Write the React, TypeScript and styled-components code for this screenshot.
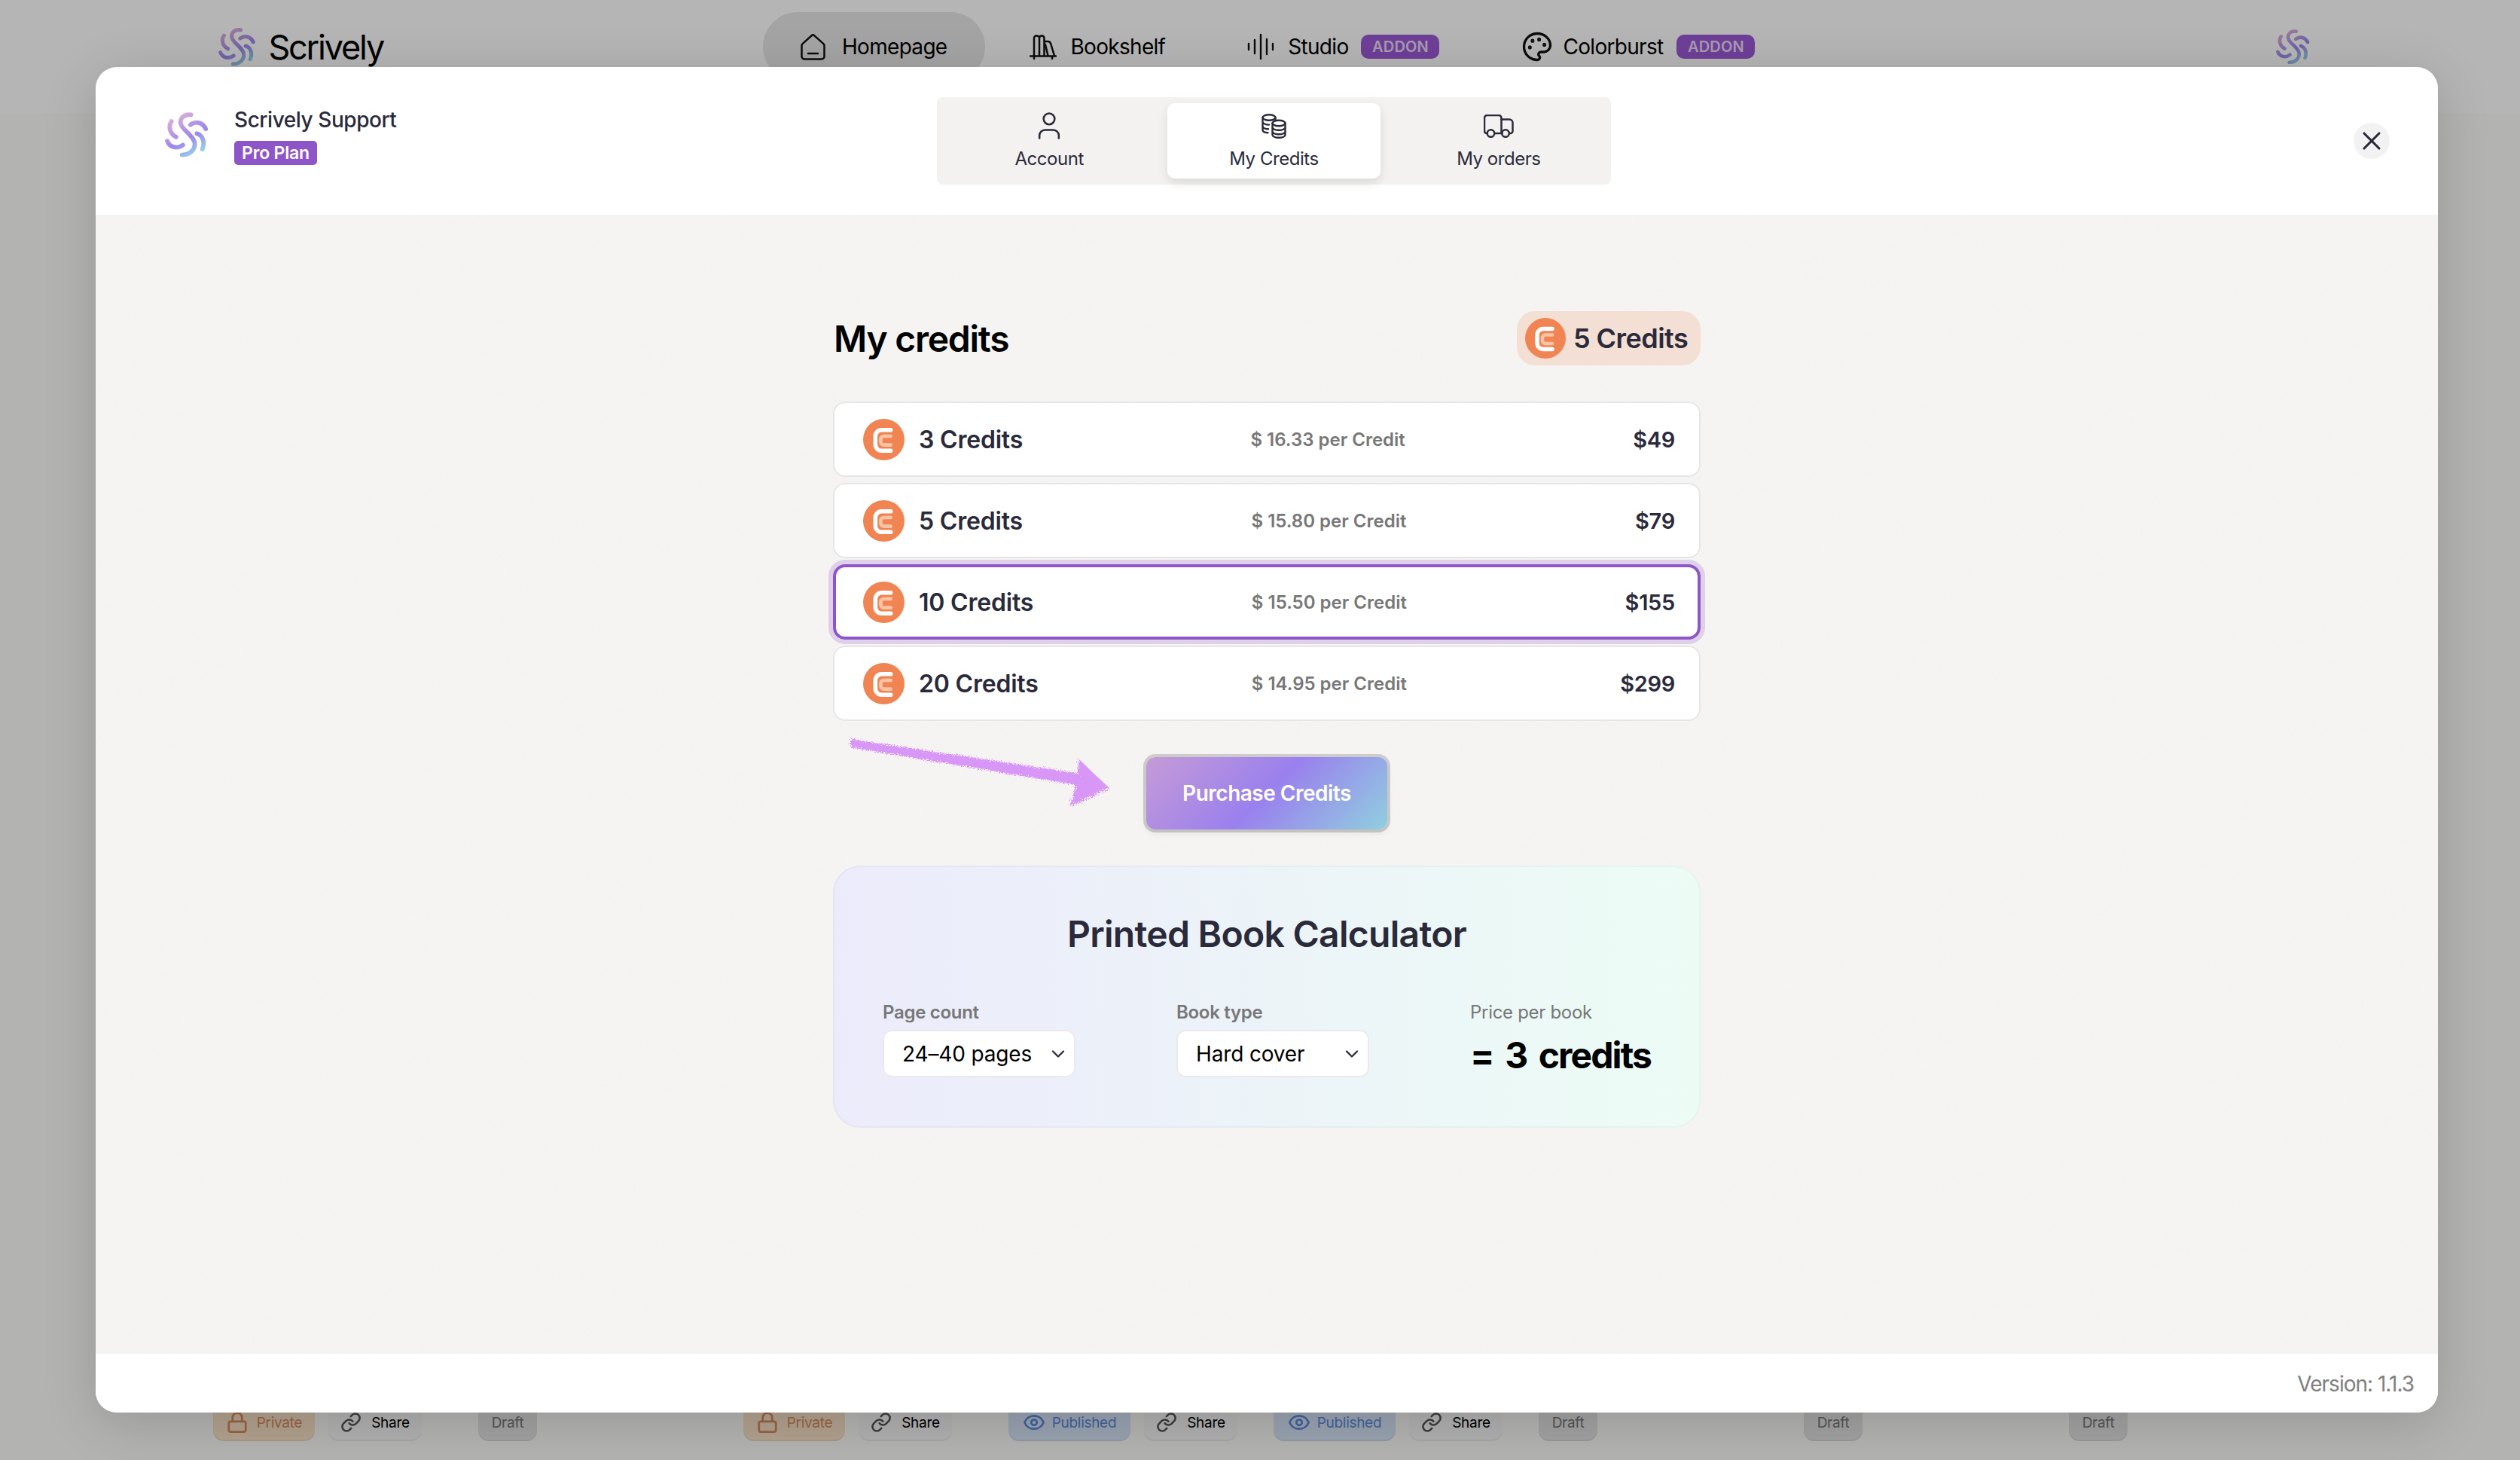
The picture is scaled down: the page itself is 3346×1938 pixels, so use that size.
import React from "react";
import styled, { createGlobalStyle } from "styled-components";
import { Lock, Link as LinkIcon, Eye, Palette, User, ChevronDown, X } from "lucide-react";

const Global = createGlobalStyle`
  html, body { margin: 0; padding: 0; }
  body { font-family: Inter, "Liberation Sans", sans-serif; color: #000; overflow: hidden; }
  * { box-sizing: border-box; }
`;

const Page = styled.div`
  position: relative; width: 3346px; height: 1938px; overflow: hidden;
  display: flex; flex-direction: column; justify-content: space-between;
  background: linear-gradient(#ffffff 0 150px, #fdfcfa 150px);
`;
const Nav = styled.nav`
  display: flex; align-items: flex-start; padding: 16px 279px 0 290px;
`;
const Brand = styled.div`
  display: flex; align-items: center; gap: 17px; height: 92px; width: 219px;
  font-size: 45px; letter-spacing: -2.2px; font-weight: 400; color: #000;
`;
const BrandEnd = styled.div`
  display: flex; align-items: center; height: 92px; width: 45px;
`;
const NavLinks = styled.div`
  display: flex; gap: 9px; margin-left: 504px; margin-right: auto;
`;
const NavLink = styled.div<{ $active?: boolean; $gap?: number }>`
  display: flex; align-items: center; gap: ${(p) => p.$gap ?? 19}px; height: 92px; padding: 0 50px;
  border-radius: 50px; font-size: 28px; letter-spacing: -.7px; color: #000;
  background: ${(p) => (p.$active ? "#e8e8e8" : "transparent")};
`;
const PaletteIcon = styled(Palette)`
  margin-right: -6px;
`;
const AddonBadge = styled.span`
  display: inline-flex; align-items: center; justify-content: center;
  width: 104px; height: 32px; margin-left: -1px; border-radius: 10px; background: #9b59d6;
  color: #e9dcf6; font-size: 20px; font-weight: 600; letter-spacing: .2px;
`;
const BottomRow = styled.div`
  display: grid; grid-template-columns: repeat(8, 352px); padding: 0 0 25px 283px;
`;
const ChipGroup = styled.div`
  display: flex; gap: 18px;
`;
const Chip = styled.div<{ $w: number; $bg: string; $fg: string; $gap?: number }>`
  display: flex; align-items: center; justify-content: center; gap: ${(p) => p.$gap ?? 10}px;
  width: ${(p) => p.$w}px; height: 50px; border-radius: 0 0 14px 14px;
  background: ${(p) => p.$bg}; color: ${(p) => p.$fg}; font-size: 19px; letter-spacing: -.3px;
  box-shadow: inset 0 -2px 0 rgba(0,0,0,.05);
`;
const ShareLabel = styled.span`
  color: #000;
`;
const Scrim = styled.div`
  position: absolute; inset: 0; display: flex; padding: 89px 109px 63px 127px;
  background: rgba(0,0,0,.29);
`;
const Modal = styled.div`
  flex: 1; display: flex; flex-direction: column; background: #fff; border-radius: 28px;
  overflow: hidden; box-shadow: 0 14px 70px rgba(0,0,0,.16);
`;
const Header = styled.header`
  display: grid; grid-template-columns: 1025px 895px 1fr; align-items: center;
  height: 196px; padding: 0 64px 0 92px; flex: none;
`;
const Identity = styled.div`
  align-self: start; margin-top: 60px; display: flex; align-items: flex-start; gap: 34px;
`;
const IdentityText = styled.div`
  display: flex; flex-direction: column; align-items: flex-start; gap: 11px; margin-top: -7px;
`;
const UserName = styled.div`
  font-size: 28px; line-height: 34px; font-weight: 500; color: #2a2a3a; letter-spacing: -.45px;
`;
const PlanBadge = styled.div`
  display: flex; align-items: center; justify-content: center; width: 110px; height: 32px;
  border-radius: 5px; background: #8e55c8; color: #fff; font-size: 23px; font-weight: 600; letter-spacing: -.2px;
`;
const Tabs = styled.div`
  display: grid; grid-template-columns: repeat(3, 1fr); gap: 16px; padding: 8px;
  height: 116px; background: #f3f2f0; border-radius: 8px;
`;
const Tab = styled.div<{ $active?: boolean }>`
  display: flex; flex-direction: column; align-items: center; padding-top: 13px; gap: 12px;
  font-size: 24px; line-height: 30px; color: #2a2a3a; letter-spacing: -.45px;
  border-radius: 10px; background: ${(p) => (p.$active ? "#fff" : "transparent")};
  box-shadow: ${(p) => (p.$active ? "0 6px 14px rgba(0,0,0,.1)" : "none")};
`;
const TabIcon = styled.div`
  display: flex; align-items: center; justify-content: center; height: 34px;
`;
const CloseButton = styled.button`
  justify-self: end; width: 48px; height: 48px; border: 0; padding: 0; border-radius: 50%;
  background: #f2f2f3; color: #2a2a3a; display: flex; align-items: center; justify-content: center;
`;
const Body = styled.main`
  position: relative; flex: 1; background: #f5f4f2; padding-top: 128px;
`;
const Grain = styled.svg`
  position: absolute; inset: 0; width: 100%; height: 100%; opacity: .5; pointer-events: none;
`;
const Column = styled.div`
  position: relative; width: 1152px; margin: 0 auto; display: flex; flex-direction: column;
`;
const TitleRow = styled.div`
  display: flex; align-items: center; justify-content: space-between; height: 72px; padding-left: 1px;
`;
const Title = styled.h1`
  margin: 0; font-size: 48px; font-weight: 600; color: #000; letter-spacing: -1.25px;
`;
const Balance = styled.div`
  display: flex; align-items: center; gap: 10px; width: 244px; height: 72px; padding-left: 11px;
  border-radius: 24px; background: #f4dfd4; color: #2a2a3a;
  font-size: 36px; font-weight: 600; letter-spacing: -.55px;
`;
const RowList = styled.div`
  display: flex; flex-direction: column; gap: 8px; margin-top: 48px;
`;
const Row = styled.div<{ $selected?: boolean }>`
  display: flex; align-items: center; justify-content: space-between; height: 100px;
  padding: 0 34px 0 40px; background: #fff; border-radius: 16px;
  box-shadow: ${(p) =>
    p.$selected
      ? "inset 0 0 0 4px #8e55c8, 0 0 0 6px #ddd0e8"
      : "inset 0 0 0 2px #e6e6e6"};
`;
const RowLeft = styled.div`
  display: flex; align-items: center; gap: 19px; font-size: 32px; font-weight: 600;
  color: #2a2a3a; letter-spacing: -.2px;
`;
const RowMid = styled.div`
  font-size: 24px; font-weight: 600; color: #777; letter-spacing: 0;
`;
const RowPrice = styled.div`
  font-size: 29px; font-weight: 600; color: #2a2a3a; letter-spacing: -.3px;
`;
const ButtonRow = styled.div`
  position: relative; display: flex; justify-content: center; margin: 48px 0;
`;
const ArrowMark = styled.svg`
  position: absolute; left: 16px; top: -30px; width: 360px; height: 105px; overflow: visible;
`;
const Purchase = styled.button`
  width: 320px; height: 96px; border: 0; border-radius: 12px; color: #fff;
  font-family: inherit; font-size: 28px; font-weight: 600; letter-spacing: -.5px;
  background: linear-gradient(135deg, #c59bd6 0%, #9a80ee 50%, #90cfdf 100%);
  box-shadow: 0 0 0 4px rgba(0,0,0,.16), 0 6px 10px rgba(0,0,0,.06);
`;
const Calculator = styled.section`
  height: 348px; padding: 62px 0 0 66px; border-radius: 36px;
  background: linear-gradient(90deg, #ecebfb, #ecfcf5);
  box-shadow: inset 0 0 0 2px rgba(90,90,140,.05);
`;
const CalcTitle = styled.h2`
  margin: 0 0 60px -66px; font-size: 48px; line-height: 58px; font-weight: 600; text-align: center;
  color: #2a2a3a; letter-spacing: -.72px;
`;
const CalcGrid = styled.div`
  display: grid; grid-template-columns: 390px 390px auto;
`;
const Field = styled.div`
  display: flex; flex-direction: column; gap: 8px; align-items: flex-start;
`;
const FieldLabel = styled.div<{ $light?: boolean }>`
  font-size: 24px; line-height: 30px; color: #777; letter-spacing: -.3px;
  font-weight: ${(p) => (p.$light ? 400 : 600)};
`;
const SelectBox = styled.div`
  display: flex; align-items: center; justify-content: space-between; width: 256px; height: 63px;
  padding: 0 9px 0 26px; background: #fff; border-radius: 12px;
  box-shadow: inset 0 0 0 2px #ebe9ee; font-size: 28px; letter-spacing: -.15px; color: #000;
`;
const PriceValue = styled.div`
  height: 63px; padding-top: 3px; display: flex; align-items: center; font-size: 48px; font-weight: 700;
  color: #000; letter-spacing: -1.9px; word-spacing: 6px; white-space: nowrap;
`;
const Footer = styled.footer`
  flex: none; height: 78px; display: flex; align-items: center; justify-content: flex-end;
  padding: 2px 32px 0 0; background: #fff; color: #808080; font-size: 28px; letter-spacing: -1px;
`;

const Swirl = ({ size, id }: { size: number; id: string }) => (
  <svg width={size} height={size * 1.03} viewBox="88 120 168 173" fill="none">
    <defs>
      <linearGradient id={id} gradientUnits="userSpaceOnUse" x1="110" y1="125" x2="205" y2="292">
        <stop offset="0" stopColor="#e6b6d2" />
        <stop offset=".6" stopColor="#9d86ef" />
        <stop offset="1" stopColor="#94dbe6" />
      </linearGradient>
    </defs>
    <g stroke={`url(#${id})`} strokeWidth="17" strokeLinecap="round">
      <path d="M188 130C160 126 140 146 151 170C162 192 190 206 201 232C209 258 188 284 154 284" />
      <path d="M186 168C208 152 234 160 245 184" />
      <path d="M113 155C99 176 108 204 131 215" />
      <path d="M97 231C106 256 136 262 157 246" />
      <path d="M211 202C234 210 243 236 232 262" />
    </g>
  </svg>
);

const Coin = ({ size = 55 }: { size?: number }) => (
  <svg width={size} height={size} viewBox="0 0 54 54" fill="none">
    <circle cx="27" cy="27" r="27" fill="#f08553" />
    <path d="M36 14.500H24a8 8 0 0 0-8 8v11a8 8 0 0 0 8 8h12" stroke="#fff" strokeWidth="5.500" strokeLinecap="round" />
    <path d="M36 22.500H27a4 4 0 0 0-4 4v3.500a4 4 0 0 0 4 4h9" stroke="#fbc4a6" strokeWidth="4.500" strokeLinecap="round" />
  </svg>
);

const HomeIcon = () => (
  <svg width="33" height="35" viewBox="0 0 33 35" fill="none" stroke="#111" strokeWidth="2.500" strokeLinecap="round" strokeLinejoin="round">
    <path d="M1.500 15.500c0-1 .4-1.800 1.100-2.400L14.600 2.300a2.800 2.800 0 0 1 3.800 0l12 10.800c.7.6 1.100 1.400 1.100 2.400V30a3.500 3.500 0 0 1-3.500 3.500H5A3.500 3.500 0 0 1 1.500 30Z" />
    <path d="M10 26h13" />
  </svg>
);
const ShelfIcon = () => (
  <svg width="36" height="33" viewBox="0 0 36 33" fill="none" stroke="#111" strokeWidth="2.500" strokeLinecap="round" strokeLinejoin="round">
    <path d="M6 28V4.500A3 3 0 0 1 9 1.500h1a3 3 0 0 1 3 3V28M13 28V4.500a3 3 0 0 1 3-3h.500a3 3 0 0 1 3 3V28" />
    <path d="M21 9h3.500c2 0 3 1 3.600 2.800L33 28M21 13l3.500 15" />
    <path d="M1 28.500h34M6 28.500V32M30 28.500V32" />
  </svg>
);
const WaveIcon = () => (
  <svg width="36" height="36" viewBox="0 0 36 36" fill="none" stroke="#111" strokeWidth="2.400" strokeLinecap="round">
    <path d="M2 14v8M10 9v18M18 2v32M26 8v20M34 14v8" />
  </svg>
);
const CoinsIcon = () => (
  <svg width="33" height="33" viewBox="0 0 33 33" fill="none" stroke="#2a2a3a" strokeWidth="2.400" strokeLinecap="round" strokeLinejoin="round">
    <ellipse cx="10" cy="5" rx="8.500" ry="3.800" />
    <path d="M1.500 5v16.500c0 2 3 3.500 7 3.700M1.500 10.800c0 2.200 3.800 3.800 8.500 3.800M1.500 16.500c0 2.200 3.400 3.800 7.500 3.800M18.500 5v4" />
    <ellipse cx="23" cy="12.500" rx="8.500" ry="3.800" />
    <path d="M14.500 12.500V28c0 2.200 3.800 3.800 8.500 3.800s8.500-1.600 8.500-3.800V12.500M14.500 18c0 2.200 3.800 3.800 8.500 3.800s8.500-1.600 8.500-3.800M14.500 23.500c0 2.200 3.800 3.800 8.500 3.800s8.500-1.600 8.500-3.800" />
  </svg>
);
const TruckIcon = () => (
  <svg width="40" height="31" viewBox="0 0 40 31" fill="none" stroke="#2a2a3a" strokeWidth="2.500" strokeLinecap="round" strokeLinejoin="round">
    <path d="M5 25H4a3 3 0 0 1-3-3V4.500a3.500 3.500 0 0 1 3.500-3.500H20a3.500 3.500 0 0 1 3.500 3.500V25M14.500 25h10" />
    <path d="M23.500 6.500H34a4.500 4.500 0 0 1 4.500 4.500v11a3 3 0 0 1-3 3H34" />
    <circle cx="9.500" cy="25" r="4.800" />
    <circle cx="29" cy="25" r="4.800" />
  </svg>
);

const TIERS = [
  { name: "3 Credits", per: "$ 16.33 per Credit", price: "$49" },
  { name: "5 Credits", per: "$ 15.80 per Credit", price: "$79" },
  { name: "10 Credits", per: "$ 15.50 per Credit", price: "$155", selected: true },
  { name: "20 Credits", per: "$ 14.95 per Credit", price: "$299" },
];

const PRIVATE = { $w: 135, $bg: "#fbe3c8", $fg: "#d98c5e", $gap: 11 };
const SHARE = { $w: 124, $bg: "#f8f8f8", $fg: "#555", $gap: 13 };
const DRAFT = { $w: 78, $bg: "#e4e4e4", $fg: "#777" };
const PUBLISHED = { $w: 162, $bg: "#d8e6f8", $fg: "#5d8ae0", $gap: 9 };

const ShareChip = () => (
  <Chip {...SHARE}>
    <LinkIcon size={28} strokeWidth={2.2} />
    <ShareLabel>Share</ShareLabel>
  </Chip>
);

export default function App() {
  return (
    <Page>
      <Global />
      <Nav>
        <Brand>
          <Swirl size={53} id="g-nav" />
          Scrively
        </Brand>
        <NavLinks>
          <NavLink $active $gap={22}><HomeIcon />Homepage</NavLink>
          <NavLink><ShelfIcon />Bookshelf</NavLink>
          <NavLink $gap={18}><WaveIcon />Studio<AddonBadge>ADDON</AddonBadge></NavLink>
          <NavLink><PaletteIcon size={42} strokeWidth={1.9} color="#111" />Colorburst<AddonBadge>ADDON</AddonBadge></NavLink>
        </NavLinks>
        <BrandEnd>
          <Swirl size={45} id="g-nav2" />
        </BrandEnd>
      </Nav>
      <BottomRow>
        <ChipGroup>
          <Chip {...PRIVATE}><Lock size={30} strokeWidth={2.2} />Private</Chip>
          <ShareChip />
        </ChipGroup>
        <ChipGroup><Chip {...DRAFT}>Draft</Chip></ChipGroup>
        <ChipGroup>
          <Chip {...PRIVATE}><Lock size={30} strokeWidth={2.2} />Private</Chip>
          <ShareChip />
        </ChipGroup>
        <ChipGroup>
          <Chip {...PUBLISHED}><Eye size={30} strokeWidth={2.2} />Published</Chip>
          <ShareChip />
        </ChipGroup>
        <ChipGroup>
          <Chip {...PUBLISHED}><Eye size={30} strokeWidth={2.2} />Published</Chip>
          <ShareChip />
        </ChipGroup>
        <ChipGroup><Chip {...DRAFT}>Draft</Chip></ChipGroup>
        <ChipGroup><Chip {...DRAFT}>Draft</Chip></ChipGroup>
        <ChipGroup><Chip {...DRAFT}>Draft</Chip></ChipGroup>
      </BottomRow>
      <Scrim>
        <Modal>
          <Header>
            <Identity>
              <Swirl size={58} id="g-head" />
              <IdentityText>
                <UserName>Scrively Support</UserName>
                <PlanBadge>Pro Plan</PlanBadge>
              </IdentityText>
            </Identity>
            <Tabs>
              <Tab><TabIcon><User size={44} strokeWidth={1.4} /></TabIcon>Account</Tab>
              <Tab $active><TabIcon><CoinsIcon /></TabIcon>My Credits</Tab>
              <Tab><TabIcon><TruckIcon /></TabIcon>My orders</Tab>
            </Tabs>
            <CloseButton aria-label="Close"><X size={40} strokeWidth={1.9} /></CloseButton>
          </Header>
          <Body>
            <Grain aria-hidden="true">
              <filter id="grain">
                <feTurbulence type="fractalNoise" baseFrequency=".35" numOctaves="2" seed="4" />
                <feColorMatrix values="0 0 0 0 .55  0 0 0 0 .53  0 0 0 0 .5  .5 0 0 0 -.2" />
              </filter>
              <rect width="100%" height="100%" filter="url(#grain)" opacity=".16" />
            </Grain>
            <Column>
              <TitleRow>
                <Title>My credits</Title>
                <Balance><Coin size={54} />5 Credits</Balance>
              </TitleRow>
              <RowList>
                {TIERS.map((t) => (
                  <Row key={t.name} $selected={t.selected}>
                    <RowLeft><Coin />{t.name}</RowLeft>
                    <RowMid>{t.per}</RowMid>
                    <RowPrice>{t.price}</RowPrice>
                  </Row>
                ))}
              </RowList>
              <ButtonRow>
                <ArrowMark viewBox="0 0 360 105" fill="none" aria-hidden="true">
                  <filter id="rough" x="-10%" y="-30%" width="120%" height="160%">
                    <feTurbulence type="fractalNoise" baseFrequency="1.1" numOctaves="2" seed="7" />
                    <feDisplacementMap in="SourceGraphic" scale="11" />
                  </filter>
                  <g filter="url(#rough)" fill="#d896f7">
                    <path d="M8 6 L312 52 L312 68 L7 17 Z" />
                    <path d="M310 32 Q330 52 351 71 Q325 85 298 95 Q304 78 308 62 Z" />
                  </g>
                </ArrowMark>
                <Purchase>Purchase Credits</Purchase>
              </ButtonRow>
              <Calculator>
                <CalcTitle>Printed Book Calculator</CalcTitle>
                <CalcGrid>
                  <Field>
                    <FieldLabel>Page count</FieldLabel>
                    <SelectBox>24–40 pages<ChevronDown size={28} strokeWidth={2} color="#2a2a3a" /></SelectBox>
                  </Field>
                  <Field>
                    <FieldLabel>Book type</FieldLabel>
                    <SelectBox>Hard cover<ChevronDown size={28} strokeWidth={2} color="#2a2a3a" /></SelectBox>
                  </Field>
                  <Field>
                    <FieldLabel $light>Price per book</FieldLabel>
                    <PriceValue>= 3 credits</PriceValue>
                  </Field>
                </CalcGrid>
              </Calculator>
            </Column>
          </Body>
          <Footer>Version: 1.1.3</Footer>
        </Modal>
      </Scrim>
    </Page>
  );
}
